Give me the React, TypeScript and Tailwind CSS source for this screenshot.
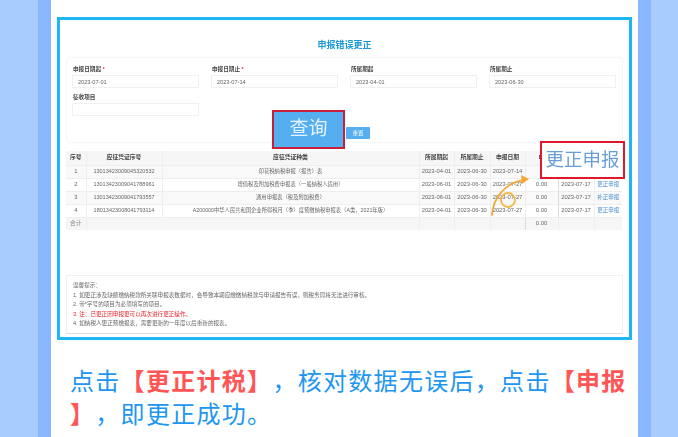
const cjk = "font-['Liberation_Sans','Noto_Sans_CJK_SC',sans-serif]"

const rows = [
  { no: '1', code: '13013423009045320532', name: '印花税纳税申报（报告）表', from: '2023-04-01', to: '2023-06-30', date: '2023-07-14', tax: '', paid: '', action: '' },
  { no: '2', code: '13013423009041788961', name: '增值税及附加税费申报表（一般纳税人适用）', from: '2023-06-01', to: '2023-06-30', date: '2023-07-27', tax: '0.00', paid: '2023-07-17', action: '更正申报' },
  { no: '3', code: '13013423009041793557', name: '通用申报表（税及附加税费）', from: '2023-06-01', to: '2023-06-30', date: '2023-07-27', tax: '0.00', paid: '2023-07-17', action: '补正申报' },
  { no: '4', code: '18013423008041793114', name: 'A200000中华人民共和国企业所得税月（季）度预缴纳税申报表（A类，2021年版）', from: '2023-04-01', to: '2023-06-30', date: '2023-07-27', tax: '0.00', paid: '2023-07-17', action: '更正申报' },
]

const fields = [
  { label: '申报日期起', required: true, value: '2023-07-01' },
  { label: '申报日期止', required: true, value: '2023-07-14' },
  { label: '所属期起', required: false, value: '2023-04-01' },
  { label: '所属期止', required: false, value: '2023-06-30' },
  { label: '征收项目', required: false, value: '' },
]

const headers = ['序号', '应征凭证序号', '应征凭证种类', '所属期起', '所属期止', '申报日期', '申', '', '']

function Field({ label, required, value }: { label: string; required: boolean; value: string }) {
  return (
    <div>
      <div className="h-[9px] pl-px text-[5.6px] leading-[9px] font-bold text-[#444]">
        {label}
        {required && <span className="text-[#e33]"> *</span>}
      </div>
      <div className="mt-[1px] h-[13px] border border-[#f0f0f0] pl-[5px] text-[5.6px] leading-[13px] text-[#666]">
        {value}
      </div>
    </div>
  )
}

function Screenshot() {
  return (
    <div className="relative h-[323px] border-[3px] border-[#1db5f2] bg-white px-[6px] pb-[4px] blur-[0.3px]">
      <h1 className="h-[37px] pt-[19px] text-center text-[9px] leading-[12px] font-bold text-[#1b9ad8]">申报错误更正</h1>

      <div className="h-[86px] rounded-sm border border-[#f6f6f6] px-[5px] pt-[7px]">
        <div className="grid grid-cols-[127px_127px_127px_127px] gap-x-[12px] gap-y-[5px]">
          {fields.map((f) => (
            <Field key={f.label} {...f} />
          ))}
        </div>
        <div className="mt-[11px] flex justify-start pl-[274px]">
          <button type="button" className="h-[12px] w-[24px] rounded-[1px] bg-[#55aef0] text-[5.5px] text-white">
            重置
          </button>
        </div>
      </div>

      <table className="mt-[8px] w-[556px] table-fixed border-collapse text-center text-[5.8px] text-[#666]">
        <colgroup>
          <col className="w-[20px]" />
          <col className="w-[76px]" />
          <col className="w-[257px]" />
          <col className="w-[35px]" />
          <col className="w-[36px]" />
          <col className="w-[35px]" />
          <col className="w-[33px]" />
          <col className="w-[36px]" />
          <col className="w-[28px]" />
        </colgroup>
        <thead>
          <tr className="h-[14px] bg-[#f6f6f6] text-[#444]">
            {headers.map((h, i) => (
              <th key={i} className="border-r border-[#eee] p-0 font-bold">{h}</th>
            ))}
          </tr>
        </thead>
        <tbody>
          {rows.map((r, i) => (
            <tr key={r.no} className={`h-[13px] border-t border-[#eee] ${i % 2 === 0 ? 'bg-[#f9f9f9]' : 'bg-white'}`}>
              <td className="border-r border-[#eee] p-0">{r.no}</td>
              <td className="border-r border-[#eee] p-0 text-[5.5px]">{r.code}</td>
              <td className="border-r border-[#eee] p-0 text-[5.3px] whitespace-nowrap">{r.name}</td>
              <td className="border-r border-[#eee] p-0">{r.from}</td>
              <td className="border-r border-[#eee] p-0">{r.to}</td>
              <td className="border-r border-[#eee] p-0">{r.date}</td>
              <td className="border-r border-[#ddd] p-0">{r.tax}</td>
              <td className="border-r border-[#eee] p-0">{r.paid}</td>
              <td className="p-0 text-[5.5px] text-[#4a90d0]">{r.action}</td>
            </tr>
          ))}
          <tr className="h-[13px] border-t border-[#eee] bg-[#f6f6f6]">
            <td className="border-r border-[#eee] p-0 text-[#888]">合计</td>
            <td className="p-0" colSpan={2} />
            <td className="border-x border-[#eee] p-0" />
            <td className="border-r border-[#eee] p-0" />
            <td className="border-r border-[#ddd] p-0" />
            <td className="border-r border-[#eee] p-0">0.00</td>
            <td className="border-r border-[#eee] p-0" />
            <td className="p-0" />
          </tr>
        </tbody>
      </table>

      <div className="mt-[45px] h-[59px] border border-[#f0f0f0] border-b-[#ddd] px-[6px] pt-[5px] text-[5.6px] leading-[9.6px] text-[#666]">
        <p>温馨提示：</p>
        <p>1. 如更正涉及缺额缴纳税款所关联申报表数据时，会导致本期应缴缴纳税款与申请报告有误，则税务局将无法进行审核。</p>
        <p>2. 带*字号的项目为必须填写的项目。</p>
        <p className="text-[#e8262c]">3. 注：已更正因申报更可以再次进行更正操作。</p>
        <p>4. 如纳税人更正预缴报表，需要更新的一年度以后重新的报表。</p>
      </div>

      {/* annotations drawn over the screenshot */}
      <div className="absolute top-[90px] left-[212px] flex h-[39px] w-[73px] items-center justify-center border-[2px] border-[#c8203c] bg-[#55aef0] text-[19px] text-[#e6f3fd]">
        查询
      </div>
      <div className="absolute top-[121px] left-[480px] flex h-[38px] w-[85px] items-center justify-center border-[2px] border-[#e0182e] bg-white text-[18.5px] leading-none text-[#6a9fd6]">
        更正申报
      </div>
      <svg className="absolute top-[155px] left-[428px]" width="46" height="45" viewBox="0 0 46 45" fill="none">
        <path d="M4 40 C5 24 16 8 36 5" stroke="#f2a93b" strokeWidth="1.8" strokeLinecap="round" />
        <path d="M33 0 L41 4 L34 9 Z" fill="#f2a93b" />
        <circle cx="20" cy="25" r="7" stroke="#f2b84a" strokeWidth="1.8" />
      </svg>
    </div>
  )
}

export default function App() {
  return (
    <div className={`flex h-[437px] w-[678px] overflow-hidden bg-[#a9ccff] px-[27px] ${cjk}`} lang="zh-CN">
      <div className="ml-[11px] w-[13px] shrink-0 bg-[#8ab6ff]" />
      <main className="w-[587px] shrink-0 bg-white px-[6px] pt-[17px]">
        <Screenshot />
        <p className="mt-[25px] pl-[13px] text-[24px] leading-[33px] tracking-[1.3px] whitespace-nowrap text-[#2196f0] [text-spacing-trim:space-all]">
          点击<strong className="font-bold text-[#ff5555]">【更正计税】</strong>，核对数据无误后，点击<strong className="font-bold text-[#ff5555]">【申报</strong>
          <br />
          <strong className="font-bold text-[#ff5555]">】</strong>，即更正成功。
        </p>
      </main>
      <div className="w-[13px] shrink-0 bg-[#8ab6ff]" />
    </div>
  )
}
